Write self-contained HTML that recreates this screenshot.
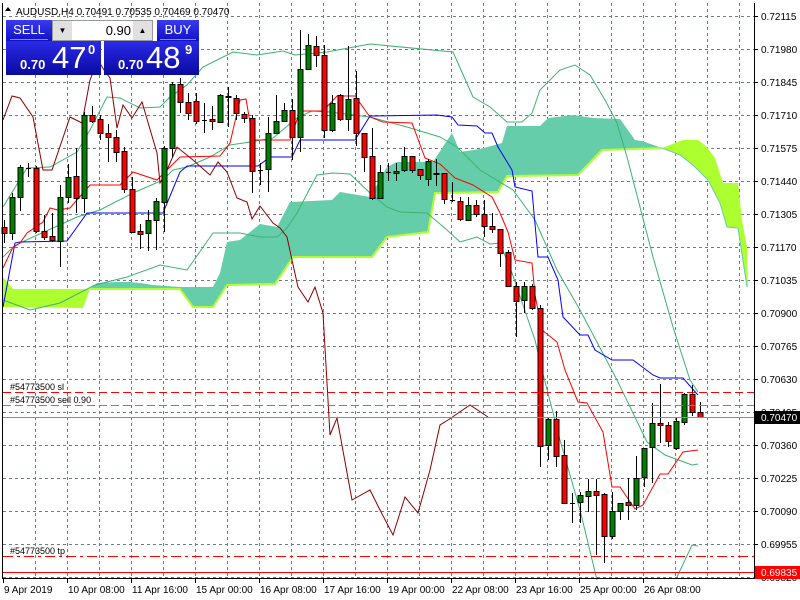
<!DOCTYPE html>
<html><head><meta charset="utf-8">
<style>
html,body{margin:0;padding:0;background:#fff;width:800px;height:600px;overflow:hidden;font-family:"Liberation Sans",sans-serif}
svg{position:absolute;left:0;top:0}
.t{font-size:10px;fill:#000}
.panel{position:absolute;color:#fff}
</style></head><body>
<svg id="s" width="800" height="600" xmlns="http://www.w3.org/2000/svg">
<g id="grid" stroke="#6f7c88" stroke-width="1" stroke-dasharray="3,3" fill="none"></g>
<g id="cloud"></g>
<g id="lines" fill="none" stroke-width="1"></g>
<g id="candles"></g>
<g id="levels"></g>
<g id="axis"></g>
</svg>
<div class="panel" style="left:6px;top:20px;width:46px;height:21px;background:linear-gradient(#3a3af0,#1010c8);font-size:13px;text-align:center;line-height:20px">SELL<div style="position:absolute;left:4px;right:4px;bottom:1px;height:1px;background:#8a8af0"></div></div>
<div class="panel" style="left:52px;top:20px;width:99px;height:19px;background:#fff;border:1px solid #999;color:#000">
 <div style="position:absolute;left:0;top:0;width:19px;height:19px;background:#e0e0e0;font-size:8px;text-align:center;line-height:19px">▼</div>
 <div style="position:absolute;left:20px;width:58px;top:0;text-align:right;font-size:13px;line-height:19px">0.90</div>
 <div style="position:absolute;right:0;top:0;width:19px;height:19px;background:#e0e0e0;font-size:8px;text-align:center;line-height:19px">▲</div>
</div>
<div class="panel" style="left:157px;top:20px;width:42px;height:21px;background:linear-gradient(#3a3af0,#1010c8);font-size:13px;text-align:center;line-height:20px">BUY<div style="position:absolute;left:3px;right:3px;bottom:1px;height:1px;background:#8a8af0"></div></div>
<div class="panel" style="left:6px;top:41px;width:95px;height:34px;background:linear-gradient(#2a2ae8,#0a0aa0)">
 <span style="position:absolute;left:14px;top:16px;font-size:13px;font-weight:bold">0.70</span>
 <span style="position:absolute;left:46px;top:-1px;font-size:31px">47</span>
 <span style="position:absolute;left:82px;top:1px;font-size:13px;font-weight:bold">0</span>
</div>
<div class="panel" style="left:104px;top:41px;width:95px;height:34px;background:linear-gradient(#2a2ae8,#0a0aa0)">
 <span style="position:absolute;left:14px;top:16px;font-size:13px;font-weight:bold">0.70</span>
 <span style="position:absolute;left:42px;top:-1px;font-size:31px">48</span>
 <span style="position:absolute;left:81px;top:1px;font-size:13px;font-weight:bold">9</span>
</div>
<script>
const NS="http://www.w3.org/2000/svg";
function el(p,tag,a,txt){const e=document.createElementNS(NS,tag);for(const k in a)e.setAttribute(k,a[k]);if(txt!=null)e.textContent=txt;document.getElementById(p).appendChild(e);return e;}
for(let y=16;y<=577;y+=33){el('grid','line',{x1:3,y1:y+.5,x2:754,y2:y+.5});}
for(let x=35;x<754;x+=32){el('grid','line',{x1:x+.5,y1:3,x2:x+.5,y2:578});}
function poly(pts,fill){el('cloud','polygon',{points:pts.map(p=>p.join(',')).join(' '),fill:fill});}
function pl(g,pts,c,w){el(g,'polyline',{points:pts.map(p=>p.join(',')).join(' '),stroke:c,'stroke-width':w||1,fill:'none'});}
const yel='#adff2f',teal='#66cdaa';
poly([[3,277],[13,289],[90,289],[83,308],[3,307]],yel);
const tTop=[[90,289],[97,283],[117,282],[130,282],[140,283],[153,285],[180,287],[213,287],[220,273],[227,242],[240,240],[260,224],[277,227],[290,202],[332,200],[340,192],[370,197],[387,167],[397,162],[433,162],[452,133],[460,152],[480,149],[502,143],[507,126],[540,126],[548,118],[573,115],[593,118],[620,119],[635,140],[642,141],[662,148]];
const tBot=[[90,289],[180,289],[193,307],[213,307],[227,285],[275,284],[293,257],[372,257],[387,237],[428,232],[435,193],[498,192],[507,176],[578,175],[602,150],[662,148]];
poly(tTop.concat(tBot.slice().reverse()),teal);
const yTop=[[662,148],[683,140],[698,140],[707,147],[715,158],[723,183],[738,183],[742,220],[747,247],[748,287]];
const yBot=[[662,148],[680,155],[693,165],[708,180],[720,203],[727,227],[738,228],[747,287]];
poly(yTop.concat(yBot.slice().reverse()),yel);
pl('cloud',tBot,yel,2);
pl('cloud',yBot,teal,1);
const green='#3cb371';
pl('lines',[[3,207],[27,168],[50,167],[77,152],[90,130],[107,97],[120,98],[140,108],[160,107],[170,97],[187,85],[203,67],[233,52],[257,55],[283,51],[295,55],[327,52],[370,44],[453,52],[473,97],[490,107],[507,122],[522,122],[532,113],[540,90],[560,70],[575,65],[590,75],[605,100],[617,123],[627,157],[653,257],[673,327],[690,380],[698,392]],green);
pl('lines',[[3,257],[10,250],[20,243],[33,237],[77,217],[100,210],[133,193],[163,180],[173,170],[187,167],[210,157],[230,145],[250,142],[273,138],[298,117],[312,111],[330,112],[370,117],[407,127],[440,137],[457,147],[480,170],[513,190],[535,220],[557,270],[580,310],[617,380],[647,442],[665,455],[692,465],[698,464]],green);
pl('lines',[[3,300],[30,310],[60,303],[95,285],[127,277],[160,265],[187,270],[213,233],[240,233],[260,237],[277,237],[287,228],[297,213],[317,175],[333,173],[350,174],[370,193],[387,207],[400,212],[427,213],[447,230],[460,242],[477,237],[490,244],[500,243],[512,273],[535,340],[542,370],[560,440],[580,510],[597,580]],green);
pl('lines',[[677,577],[692,545],[698,546]],green);
pl('lines',[[3,307],[15,243],[20,242],[67,241],[87,213],[163,213],[180,172],[187,166],[258,166],[270,157],[292,157],[300,140],[355,140],[370,116],[437,115],[452,117],[458,125],[477,126],[485,133],[492,133],[498,147],[512,170],[515,187],[532,191],[538,257],[548,257],[558,280],[563,317],[580,335],[588,335],[595,350],[612,360],[633,360],[653,375],[660,378],[683,378],[698,395]],'#0000ff');
pl('lines',[[3,268],[13,247],[20,243],[27,233],[43,222],[50,208],[58,210],[70,208],[90,185],[120,185],[133,172],[157,180],[167,170],[180,157],[220,156],[230,143],[240,100],[246,99],[253,140],[290,140],[300,111],[323,111],[337,96],[355,96],[370,117],[383,122],[412,123],[425,158],[440,164],[455,178],[473,185],[492,197],[500,213],[508,232],[515,260],[532,263],[535,295],[542,330],[557,342],[565,370],[578,402],[587,403],[603,432],[612,487],[620,487],[635,509],[643,505],[660,474],[668,474],[683,452],[698,450]],'#ff0000');
pl('lines',[[3,120],[12,96],[20,98],[33,117],[43,170],[52,170],[70,117],[82,123],[90,80],[98,60],[104,70],[110,78],[117,128],[123,105],[132,118],[142,102],[157,153],[160,183],[167,170],[177,147],[193,160],[210,175],[218,162],[227,172],[237,198],[247,202],[252,219],[260,206],[273,223],[280,228],[287,237],[292,260],[298,287],[308,302],[315,287],[323,313],[330,435],[337,418],[352,500],[370,490],[380,510],[393,535],[405,497],[418,513],[430,470],[440,425],[448,420],[470,405],[488,417]],'#8b0000');
const C=[[4,227,233,220,243],[12,233,197,193,240],[20,197,167,165,211],[28,168,168,163,177],[36,168,231,166,233],[44,231,237,215,240],[52,236,240,213,242],[60,241,197,185,267],[68,197,177,164,203],[76,176,198,148,213],[84,198,115,112,213],[92,115,121,106,123],[100,119,133,115,140],[108,133,137,124,162],[116,137,152,130,162],[124,151,189,147,193],[132,189,232,177,233],[140,231,234,224,249],[148,233,220,210,251],[156,220,201,198,250],[164,202,148,146,232],[172,148,84,82,157],[180,84,102,78,113],[188,102,113,93,120],[196,101,121,93,124],[204,120,120,103,133],[212,119,121,106,130],[220,122,95,94,123],[228,96,97,87,127],[236,98,113,95,120],[244,114,118,112,123],[252,118,171,115,193],[260,170,170,163,185],[268,169,133,117,192],[276,133,121,95,133],[284,121,110,103,122],[292,110,137,99,160],[300,137,69,30,152],[308,69,45,34,70],[316,46,55,36,67],[324,55,130,45,138],[332,130,103,95,132],[340,95,119,94,121],[348,119,99,46,131],[356,98,133,71,146],[364,133,157,133,172],[372,156,198,128,200],[380,198,172,165,199],[388,172,172,163,181],[396,173,171,163,181],[404,170,156,147,172],[412,156,170,156,173],[420,169,175,169,180],[428,179,161,159,186],[436,173,174,159,186],[444,173,199,173,204],[452,200,200,182,202],[460,201,219,197,221],[468,220,205,197,221],[476,205,214,200,217],[484,214,226,200,237],[492,226,229,213,233],[500,229,253,229,267],[508,252,286,250,287],[516,286,301,282,337],[524,300,286,282,313],[532,286,308,284,310],[540,308,446,305,467],[548,445,419,418,460],[556,419,456,411,467],[564,455,503,440,504],[572,503,503,493,523],[580,502,495,492,523],[588,496,491,479,512],[596,491,495,479,555],[604,494,536,493,563],[612,536,511,492,539],[620,511,503,503,520],[628,502,505,478,520],[636,505,478,456,510],[644,477,448,448,487],[652,447,423,403,483],[660,423,425,384,443],[668,425,441,422,447],[676,448,421,417,450],[684,422,394,393,425],[692,394,412,385,416],[700,412,417,402,418]];
for(const [x,o,c,h,l] of C){
 el('candles','line',{x1:x+.5,y1:h,x2:x+.5,y2:l,stroke:'#000'});
 const top=Math.min(o,c),bot=Math.max(o,c);
 if(bot-top<1){el('candles','line',{x1:x-2,y1:top+.5,x2:x+3,y2:top+.5,stroke:'#000'});}
 else el('candles','rect',{x:x-2,y:top+.5,width:5,height:bot-top,fill:c<o?'#008000':'#ff0000',stroke:'#000'});
}
el('levels','line',{x1:3,y1:392.5,x2:754,y2:392.5,stroke:'#ff0000','stroke-dasharray':'8,4'});
el('levels','line',{x1:3,y1:405.5,x2:754,y2:405.5,stroke:'#3cb34a','stroke-dasharray':'8,4'});
el('levels','line',{x1:3,y1:417.5,x2:754,y2:417.5,stroke:'#8090a0'});
el('levels','line',{x1:3,y1:556.5,x2:754,y2:556.5,stroke:'#ff0000','stroke-dasharray':'10,4,3,4'});
el('levels','line',{x1:3,y1:572.5,x2:754,y2:572.5,stroke:'#ff0000'});
el('levels','text',{x:10,y:390,'font-size':'9px'},'#54773500 sl');
el('levels','text',{x:10,y:403,'font-size':'9px'},'#54773500 sell 0.90');
el('levels','text',{x:10,y:554,'font-size':'9px'},'#54773500 tp');
el('axis','line',{x1:2.5,y1:3,x2:2.5,y2:579,stroke:'#000'});
el('axis','line',{x1:754.5,y1:3,x2:754.5,y2:579,stroke:'#000'});
el('axis','line',{x1:2,y1:578.5,x2:755,y2:578.5,stroke:'#000'});
const prices=['0.72115','0.71980','0.71845','0.71710','0.71575','0.71440','0.71305','0.71170','0.71035','0.70900','0.70765','0.70630','0.70495','0.70360','0.70225','0.70090','0.69955','0.69820'];
prices.forEach((p,i)=>{const y=16+33*i;el('axis','line',{x1:754,y1:y+.5,x2:758,y2:y+.5,stroke:'#000'});el('axis','text',{x:761,y:y+4,class:'t'},p);});
el('axis','rect',{x:755,y:411,width:45,height:13,fill:'#000'});
el('axis','text',{x:761,y:421,class:'t',style:'fill:#fff'},'0.70470');
el('axis','rect',{x:755,y:566,width:45,height:13,fill:'#ff0000'});
el('axis','text',{x:761,y:576,class:'t',style:'fill:#fff'},'0.69835');
const dates=['9 Apr 2019','10 Apr 08:00','11 Apr 16:00','15 Apr 00:00','16 Apr 08:00','17 Apr 16:00','19 Apr 00:00','22 Apr 08:00','23 Apr 16:00','25 Apr 00:00','26 Apr 08:00'];
dates.forEach((d,i)=>{const x=3+64*i;el('axis','line',{x1:x+.5,y1:578,x2:x+.5,y2:583,stroke:'#000'});el('axis','text',{x:x+1,y:593,class:'t'},d);});
el('axis','text',{x:16,y:15,class:'t'},'AUDUSD,H4  0.70491 0.70535 0.70469 0.70470');
el('axis','polygon',{points:'5,11 11,11 8,7',fill:'#000'});
</script>
</body></html>
